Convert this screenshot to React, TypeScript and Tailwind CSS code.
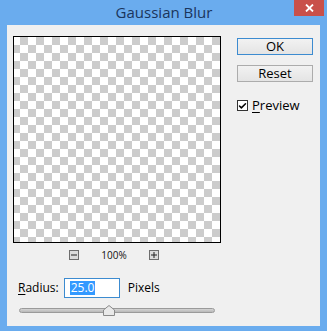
import { Check } from 'lucide-react';

function SmallBox({ sign }: { sign: '-' | '+' }) {
  return (
    <div className="w-[10px] h-[10px] border border-[#6d6d6d] bg-[#dcdcdc] flex items-center justify-center">
      <svg width="6" height="6" viewBox="0 0 6 6">
        <path d="M0 3h6" stroke="#222" strokeWidth="1" />
        {sign === '+' && <path d="M3 0v6" stroke="#222" strokeWidth="1" />}
      </svg>
    </div>
  );
}

export default function App() {
  return (
    <div className="w-[327px] h-[331px] bg-[#6aacee] flex flex-col font-['Open_Sans','Noto_Sans',sans-serif] select-none">
      {/* Title bar */}
      <div className="h-[25px] relative flex items-center justify-center">
        <span className="text-[15px] text-[#1a355c] leading-none pb-[1px] pl-[1px]">Gaussian Blur</span>
        <div className="absolute right-[3px] top-0 w-[30px] h-[16px] bg-[#c9504a] flex items-center justify-center">
          <svg width="9" height="8" viewBox="0 0 9 8">
            <path d="M1 0.5l7 7M8 0.5l-7 7" stroke="#fff" strokeWidth="1.8" />
          </svg>
        </div>
      </div>

      {/* Client area */}
      <div className="mx-[7px] h-[301px] bg-[#f0f0f0] flex flex-col pt-[11px] pl-[6px]">
        <div className="flex">
          <div className="w-[208px] flex flex-col">
            <div className="h-[207px] border border-black bg-[image:repeating-conic-gradient(#cccccc_0_25%,#ffffff_0_50%)] bg-[length:16px_16px] bg-[position:-2px_0px]" />
            <div className="mt-[7px] flex items-center justify-center gap-[22px] pr-[6px]">
              <SmallBox sign="-" />
              <span className="text-[10px] leading-none text-[#111]">100%</span>
              <SmallBox sign="+" />
            </div>
          </div>

          <div className="ml-[16px] w-[76px] flex flex-col pt-[2px]">
            <button className="h-[17px] border border-[#3c8bd0] bg-gradient-to-b from-[#f2f2f2] to-[#e4e4e4] text-[13px] leading-none text-black">
              OK
            </button>
            <button className="mt-[10px] h-[17px] border border-[#acacac] bg-gradient-to-b from-[#f2f2f2] to-[#e4e4e4] text-[13px] leading-none text-black">
              Reset
            </button>
            <div className="mt-[17px] flex items-center gap-[4px]">
              <div className="w-[11px] h-[11px] border border-[#333] bg-white flex items-center justify-center">
                <Check size={10} strokeWidth={4} color="#000" />
              </div>
              <span className="text-[13px] leading-none text-black">
                <span className="underline underline-offset-2">P</span>review
              </span>
            </div>
          </div>
        </div>

        <div className="mt-[18px] pl-[5px] flex items-center">
          <span className="text-[12px] text-black">
            <span className="underline underline-offset-2">R</span>adius:
          </span>
          <div className="ml-[5px] w-[56px] h-[20px] border border-[#3c8bd0] bg-white flex items-center pl-[5px]">
            <span className="bg-[#3399ff] text-white text-[12px] leading-[14px] px-[1px]">25.0</span>
          </div>
          <span className="ml-[8px] text-[12px] text-black">Pixels</span>
        </div>

        <div className="mt-[7px] ml-[6px] w-[196px] h-[10px] relative flex items-center">
          <div className="w-full h-[5px] rounded-full border border-[#9a9a9a] bg-gradient-to-b from-[#d4d4d4] to-[#b8b8b8]" />
          <svg className="absolute left-[84px] top-[0px]" width="12" height="11" viewBox="0 0 12 11">
            <path d="M6 0.5L11.5 5V10.5H0.5V5Z" fill="#e9e9e9" stroke="#8a8a8a" strokeWidth="1" />
          </svg>
        </div>
      </div>
    </div>
  );
}
